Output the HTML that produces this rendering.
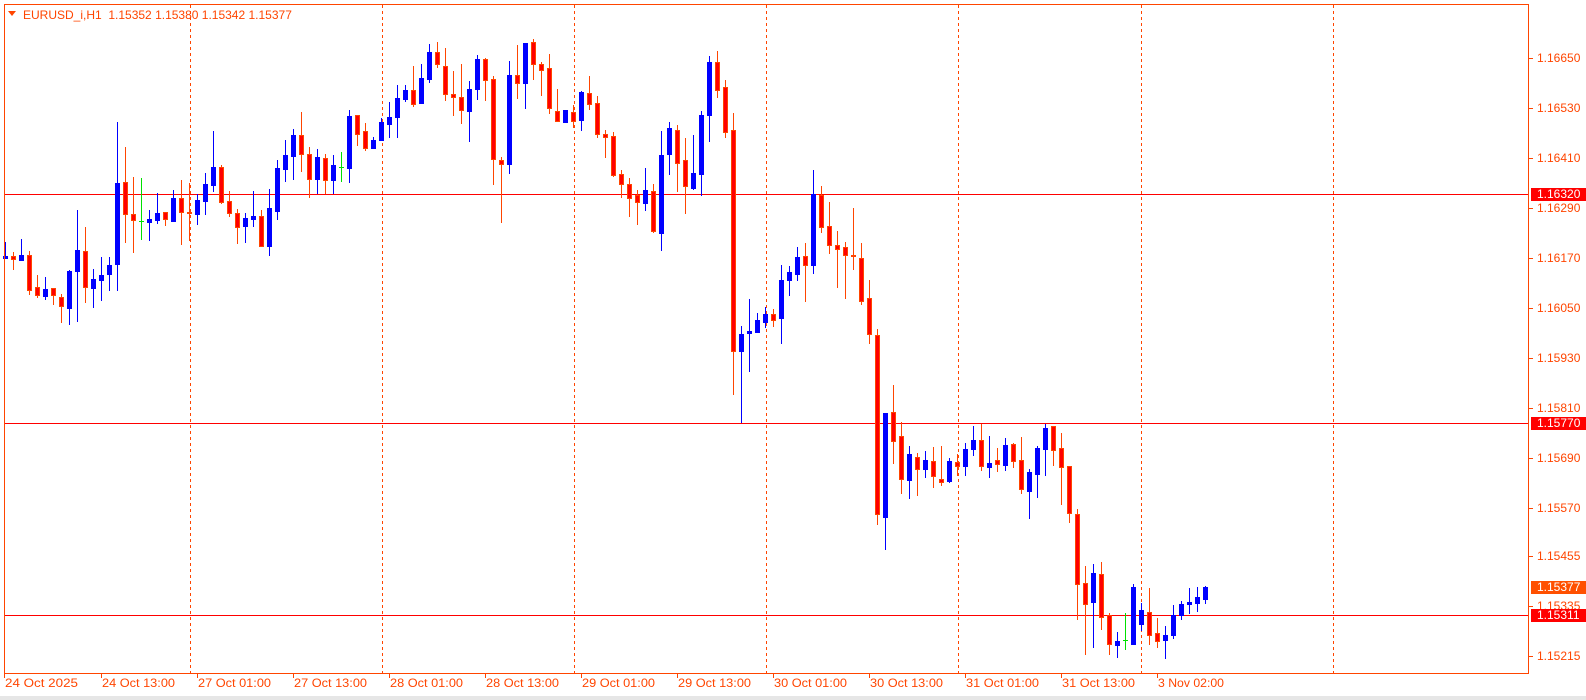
<!DOCTYPE html>
<html><head><meta charset="utf-8">
<style>
html,body{margin:0;padding:0;background:#fff;width:1586px;height:700px;overflow:hidden}
svg{display:block}
text{font-family:"Liberation Sans",sans-serif;font-size:12px}
</style></head>
<body>
<svg id="c" width="1586" height="700" xmlns="http://www.w3.org/2000/svg">
<rect x="0" y="0" width="1586" height="700" fill="#fff"/>
<rect x="0" y="696" width="1586" height="4" fill="#e6e6e6"/>
<g id="grid"></g>
<line x1="4" y1="194.5" x2="1529" y2="194.5" stroke="#ff0000" stroke-width="1"/>
<line x1="4" y1="423.5" x2="1529" y2="423.5" stroke="#ff0000" stroke-width="1"/>
<line x1="4" y1="615.5" x2="1529" y2="615.5" stroke="#ff0000" stroke-width="1"/>
<g id="candles"></g>
<rect x="4.5" y="4.5" width="1524" height="669" fill="none" stroke="#ff4500" stroke-width="1"/>
<polygon points="8,11 16,11 12,16" fill="#ff4500"/>
<text x="23" y="19" fill="#ff4500">EURUSD_i,H1&#160; 1.15352 1.15380 1.15342 1.15377</text>
<g id="axis"></g>
</svg>
<script>
var D=[
"b 256 258 242 258","r 256 259 252 269","b 255 260 239 260","r 255 290 251 294","r 287 295 275 297","b 289 296 277 299","r 288 295 288 304","r 297 306 294 322","b 271 308 270 324","b 250 271 210 321",
"r 251 287 227 302","b 279 288 269 307","b 275 280 257 300","b 265 274 257 290","b 183 264 122 290","r 182 214 147 242","r 214 220 177 252","g 221 221 178 239","b 219 222 210 240","b 213 220 193 223",
"r 212 219 212 225","b 198 221 190 221","r 198 212 180 244","r 212 213 183 240","b 200 214 194 224","b 184 201 173 214","b 167 185 131 191","r 167 202 165 203","r 201 213 191 216","r 213 227 209 243",
"b 218 226 213 242","b 216 219 191 226","r 216 246 210 246","b 208 246 189 255","b 168 211 160 219","b 155 169 140 181","b 135 156 129 179","r 135 154 112 171","r 154 179 147 197","b 157 179 149 193",
"r 158 180 154 193","b 165 180 155 193","g 167 167 152 181","b 116 168 110 182","r 115 134 115 145","r 131 148 123 150","b 140 148 137 148","b 122 140 118 140","b 117 124 102 137","b 98 117 85 137",
"b 90 99 85 101","r 90 104 66 106","b 78 103 64 103","b 52 79 44 82","r 52 64 42 67","r 66 94 48 100","r 94 97 71 115","r 97 110 64 123","b 89 111 81 141","b 59 89 55 99",
"r 59 80 58 100","r 79 159 76 184","r 160 164 157 222","b 75 164 61 173","r 75 83 45 98","b 43 83 43 108","r 42 64 39 79","r 64 70 62 95","r 68 108 54 113","r 111 121 89 121",
"b 110 122 110 122","r 112 121 105 127","b 92 120 91 130","r 93 104 76 109","r 103 134 96 137","r 134 137 130 157","r 136 175 132 176","r 174 184 170 197","r 184 198 178 216","r 195 202 190 224",
"b 190 203 168 210","r 191 231 184 232","b 155 233 131 250","b 128 154 122 174","r 130 163 125 191","r 160 186 138 213","b 173 188 135 189","b 115 174 111 195","b 62 115 56 141","r 62 90 51 97",
"r 87 132 80 137","r 130 351 113 394","b 334 351 326 422","b 331 333 299 371","b 320 332 313 332","b 314 322 307 327","r 314 320 309 326","b 280 318 265 343","b 272 280 266 295","b 257 274 247 280",
"r 256 265 243 301","b 194 265 170 273","r 195 227 186 232","r 226 245 202 253","r 245 249 231 287","r 247 255 242 298","r 255 256 208 269","r 258 301 243 304","r 298 334 280 343","r 335 514 329 524",
"b 413 517 413 549","r 412 441 385 463","r 436 479 422 493","b 454 480 446 498","r 457 469 453 495","b 460 469 451 477","r 461 476 447 487","r 479 482 446 485","b 461 481 458 482","r 462 466 454 475",
"b 449 466 443 475","b 440 449 426 455","r 440 466 424 470","b 463 467 436 477","r 460 464 448 471","b 445 465 438 470","r 444 461 443 467","r 460 489 437 493","b 472 491 469 518","b 448 474 446 497",
"b 428 449 424 475","r 426 450 426 465","r 448 467 433 504","r 466 513 466 522","r 514 584 509 619","r 583 604 566 654","b 573 602 564 647","r 574 617 562 629","r 615 644 613 654","b 641 645 632 657",
"g 640 640 613 649","b 587 644 584 644","b 610 624 603 630","r 612 635 588 644","r 633 641 618 647","b 635 640 626 658","b 615 635 605 638","b 604 615 601 619","b 602 604 588 613","b 597 603 587 611",
"b 587 599 586 603"];
var NS="http://www.w3.org/2000/svg";
function el(n,a,p){var e=document.createElementNS(NS,n);for(var k in a)e.setAttribute(k,a[k]);(p||document.getElementById('c')).appendChild(e);return e;}
var cg=document.getElementById('candles');
D.forEach(function(s,i){
 var p=s.split(' '),t=p[0],o=+p[1],c=+p[2],h=+p[3],l=+p[4];
 var x=5+8*i;
 var wc=t=='b'?'#0000ff':(t=='g'?'#00e000':'#ff4500');
 el('rect',{x:x,y:h,width:1,height:Math.max(1,l-h+1),fill:wc},cg);
 if(t=='g'){el('rect',{x:x-2,y:o,width:5,height:1,fill:wc},cg);return;}
 var hh=Math.max(1,c-o+1);
 if(t=='b'){el('rect',{x:x-2,y:o,width:5,height:hh,fill:'#0000ff'},cg);}
 else{el('rect',{x:x-2,y:o,width:5,height:hh,fill:'#ff4500'},cg);
   if(hh>2)el('rect',{x:x-1,y:o+1,width:3,height:hh-2,fill:'#ff0000'},cg);}
});
var gg=document.getElementById('grid');
[190,382,574,766,958,1141,1333].forEach(function(x){
 el('line',{x1:x+.5,y1:5,x2:x+.5,y2:673,stroke:'#ff4500','stroke-width':1,'stroke-dasharray':'3,3'},gg);
});
var ag=document.getElementById('axis');
var prices=[["1.16650",58],["1.16530",108],["1.16410",158],["1.16290",208],["1.16170",258],["1.16050",308],["1.15930",358],["1.15810",408],["1.15690",458],["1.15570",508],["1.15455",556],["1.15335",606],["1.15215",656]];
prices.forEach(function(p){
 el('rect',{x:1529,y:p[1],width:4,height:1,fill:'#ff4500'},ag);
 var t=el('text',{x:1537,y:p[1]+4,fill:'#ff4500'},ag);t.textContent=p[0];
});
[["1.16320",194,'#ff0000'],["1.15770",423,'#ff0000'],["1.15377",587,'#ff5000'],["1.15311",615,'#ff0000']].forEach(function(p){
 el('rect',{x:1531,y:p[1]-6,width:55,height:13,fill:p[2]},ag);
 var t=el('text',{x:1537,y:p[1]+4,fill:'#fff'},ag);t.textContent=p[0];
});
var times=[[4,"24 Oct 2025"],[101,"24 Oct 13:00"],[197,"27 Oct 01:00"],[293,"27 Oct 13:00"],[389,"28 Oct 01:00"],[485,"28 Oct 13:00"],[581,"29 Oct 01:00"],[677,"29 Oct 13:00"],[773,"30 Oct 01:00"],[869,"30 Oct 13:00"],[965,"31 Oct 01:00"],[1061,"31 Oct 13:00"],[1157,"3 Nov 02:00"]];
times.forEach(function(p){
 el('rect',{x:p[0],y:674,width:1,height:4,fill:'#ff4500'},ag);
 var t=el('text',{x:p[0]+1,y:687,fill:'#ff4500','textLength':p[1].length==11&&p[1][0]=='3'?66:73,lengthAdjust:'spacingAndGlyphs'},ag);t.textContent=p[1];
});
</script>
</body></html>
